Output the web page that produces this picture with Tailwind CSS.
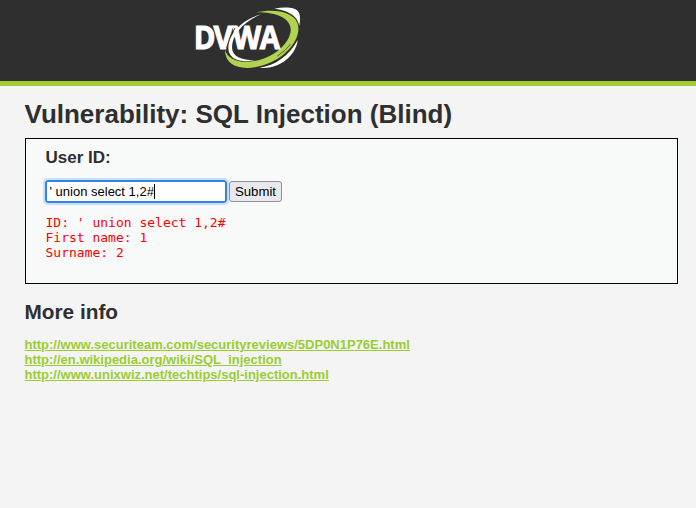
<!DOCTYPE html>
<html lang="en">
<head>
<meta charset="utf-8">
<title>Vulnerability: SQL Injection (Blind)</title>
<script src="https://cdn.jsdelivr.net/npm/@tailwindcss/browser@4"></script>
</head>
<body class="h-[508px] overflow-hidden bg-[#f4f4f4] text-[13px] leading-[15px] text-[#2f2f2f] font-['Liberation_Sans',Arial,sans-serif]">
<header class="h-[86px] border-b-[5px] border-[#a1cc33] bg-[#2f2f2f] pl-[185px]">
  <svg class="block h-[81px] w-[125px]" viewBox="0 0 375 243" role="img" aria-label="DVWA">
    <path fill="#fff" d="M268 26C300 20 332 21 341 37C347 48 345 65 343 78C339 54 321 33 268 26Z"/>
    <path fill="#fff" d="M338 120C334 166 281 211 224 203C270 198 314 165 338 120Z"/>
    <path fill="#b0d450" d="M213 37C273 24 326 38 337 68C352 106 315 161 258 187C188 218 119 207 120 149C130 184 178 195 235 176C290 157 324 110 316 80C308 50 266 36 213 37Z"/>
    <path stroke="#2f2f2f" stroke-width="2" fill="none" d="M276 169Q304 151 317 132"/>
    <path fill="#fff" d="M229 43C175 56 130 100 130 144C130 181 171 188 210 181C169 181 141 170 141 142C141 102 180 62 229 43Z"/>
    <text x="29.500 95 159 249" y="148" transform="scale(.9 1)" class="fill-white stroke-white stroke-[3px] text-[98px] font-bold font-['Open_Sans',sans-serif]">DVWA</text>
    <path fill="none" stroke="#2f2f2f" stroke-width="2.500" d="M150 84Q132 112 125 144"/>
  </svg>
</header>
<main class="pl-[24.5px] pr-[18px] pt-[13px]">
  <h1 class="text-[26px] leading-[30px] font-bold">Vulnerability: SQL Injection (Blind)</h1>
  <section class="ml-[0.5px] mt-[9px] h-[146px] border border-black bg-[#f8faf9] pl-[19.5px] pt-[9px]">
    <h3 class="text-[17px] leading-5 font-bold">User ID:</h3>
    <form class="mt-3 flex h-[23px] items-center gap-[2px]">
      <div class="relative -ml-[0.5px]">
        <input type="text" value="' union select 1,2#" class="block h-[23px] w-[182px] rounded-[3px] border-2 border-[#3584e4] bg-white pl-[2.5px] text-[13px] text-black outline-2 outline-[#c4e0fa]">
        <span class="absolute left-[109px] top-1 h-[15px] w-px bg-black"></span>
      </div>
      <button type="button" class="h-[21px] w-[53px] rounded-[3px] border border-[#8f8f9d] bg-[#e9e9ed] text-[13.2px] leading-[19px] text-black">Submit</button>
    </form>
    <pre class="mt-3 text-[13px] leading-[15px] text-[#ff0000] font-['DejaVu_Sans_Mono',monospace]">ID: ' union select 1,2#
First name: 1
Surname: 2</pre>
  </section>
  <h2 class="mt-4 text-[20.8px] leading-6 font-bold">More info</h2>
  <div class="mt-[13px] flex flex-col items-start font-bold text-[#9acd32]">
    <a class="underline" href="#">http://www.securiteam.com/securityreviews/5DP0N1P76E.html</a>
    <a class="underline" href="#">http://en.wikipedia.org/wiki/SQL_injection</a>
    <a class="underline" href="#">http://www.unixwiz.net/techtips/sql-injection.html</a>
  </div>
</main>
</body>
</html>
